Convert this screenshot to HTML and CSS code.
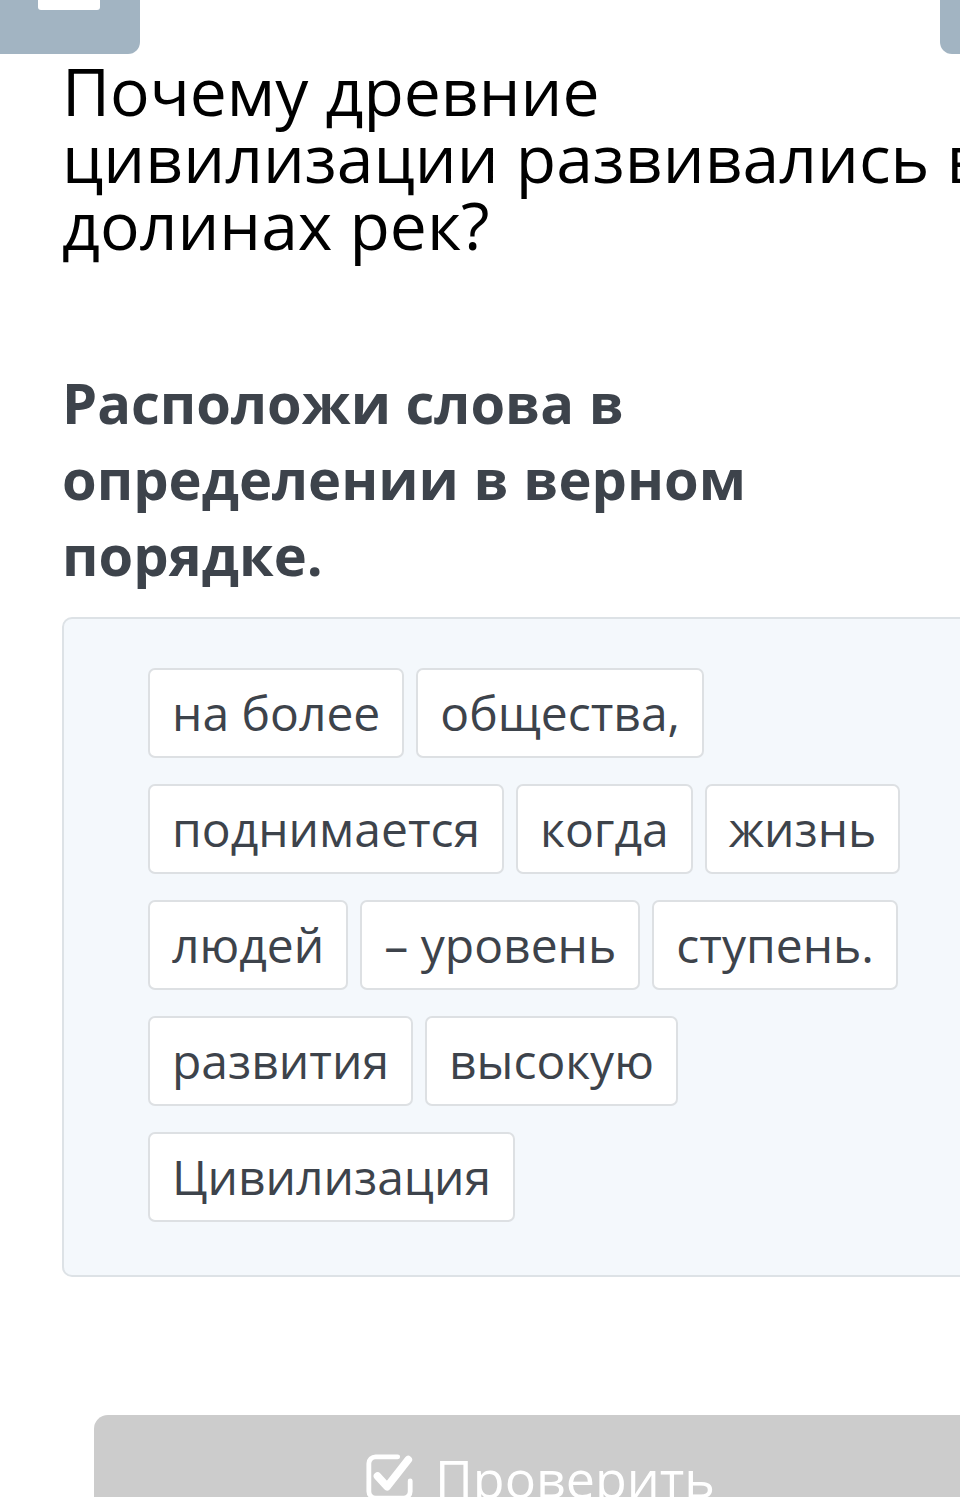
FILE: index.html
```html
<!DOCTYPE html>
<html>

<head>
  <meta charset="utf-8">
  <title>Расположи слова</title>
  <link rel="stylesheet" href="styles.css">
</head>

<body>
  <div class="topbar">
    <div class="nav_btn nav_left"><span class="nav_bar"></span></div>
    <div class="nav_btn nav_right"></div>
  </div>

  <div class="content">
    <h1 class="question">Почему древние цивилизации развивались в долинах рек?</h1>

    <h2 class="task">Расположи слова в определении в верном порядке.</h2>

    <div class="answer_box">
      <div class="words">
        <span class="word">на более</span>
        <span class="word">общества,</span>
        <span class="word">поднимается</span>
        <span class="word">когда</span>
        <span class="word">жизнь</span>
        <span class="word">людей</span>
        <span class="word">– уровень</span>
        <span class="word">ступень.</span>
        <span class="word">развития</span>
        <span class="word">высокую</span>
        <span class="word">Цивилизация</span>
      </div>
    </div>

    <div class="check_btn">
      <svg class="check_icon" viewBox="0 0 52 52" width="50" height="50">
        <path d="M34 5H11a7 7 0 0 0-7 7v29a7 7 0 0 0 7 7h29a7 7 0 0 0 7-7V30" fill="none" stroke="#fff" stroke-width="5" stroke-linecap="round"/>
        <path d="M13 25l10 11L45 8" fill="none" stroke="#fff" stroke-width="8" stroke-linecap="round" stroke-linejoin="round"/>
      </svg>
      <span>Проверить</span>
    </div>
  </div>
</body>

</html>
```

FILE: styles.css
```css
body {
  margin: 0;
  overflow: hidden;
  background-color: #fff;
  font-family: "Open Sans", "Noto Sans", sans-serif;
}

.topbar {
  display: flex;
  justify-content: space-between;
  height: 54px;
}

.nav_btn {
  background-color: #a2b4c2;
  height: 54px;
}

.nav_left {
  width: 140px;
  border-radius: 0 0 12px 0;
  display: flex;
  align-items: flex-start;
}

.nav_bar {
  width: 62px;
  height: 10px;
  margin-left: 38px;
  background-color: #fff;
  border-radius: 0 0 3px 3px;
}

.nav_right {
  width: 20px;
  border-radius: 0 0 0 12px;
}

.content {
  width: 1000px;
  padding-left: 62px;
}

.question {
  max-width: 940px;
  margin: 3px 0 0 0;
  font-size: 66px;
  line-height: 67px;
  font-weight: 400;
  color: #000;
}

.task {
  max-width: 760px;
  margin: 106px 0 0 0;
  font-size: 56px;
  line-height: 76px;
  font-weight: 700;
  color: #3d434b;
}

.answer_box {
  margin-top: 25px;
  padding: 49px 0 53px 84px;
  background-color: #f4f8fc;
  border: 2px solid #dde2e6;
  border-radius: 10px;
}

.words {
  display: flex;
  flex-wrap: wrap;
  gap: 26px 12px;
  max-width: 780px;
}

.word {
  display: inline-block;
  height: 86px;
  padding: 0 22px;
  line-height: 86px;
  font-size: 48px;
  color: #3d434b;
  background-color: #fff;
  border: 2px solid #dde0e3;
  border-radius: 7px;
  white-space: nowrap;
}

.check_btn {
  display: flex;
  justify-content: center;
  align-items: center;
  gap: 20px;
  width: 892px;
  height: 140px;
  margin: 138px 0 0 32px;
  padding-bottom: 16px;
  box-sizing: border-box;
  background-color: #cccccc;
  border-radius: 14px;
  color: #fff;
  font-size: 52px;
}
```
